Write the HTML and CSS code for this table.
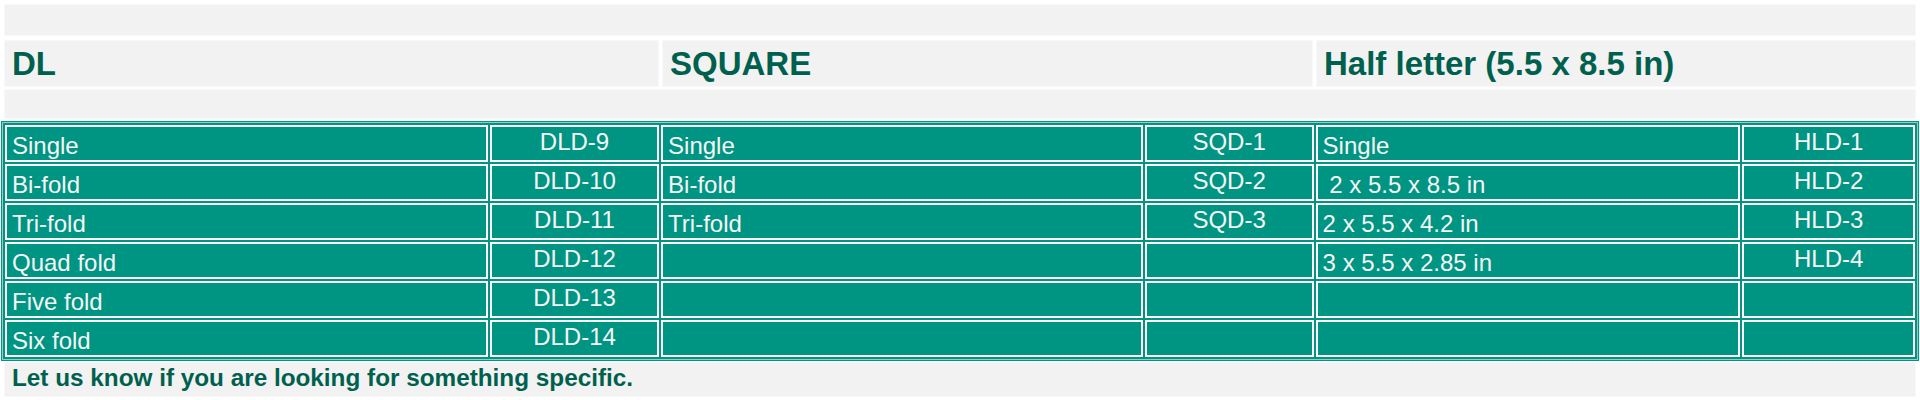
FILE: index.html
```html
<!DOCTYPE html>
<html lang="en">
<head>
<meta charset="utf-8">
<title>Folded cards</title>
<link rel="stylesheet" href="styles.css">
</head>
<body>
<div class="page">
  <div class="bar bar-top"></div>
  <div class="heads">
    <div class="head">DL</div>
    <div class="head">SQUARE</div>
    <div class="head">Half letter (5.5 x 8.5 in)</div>
  </div>
  <div class="bar bar-empty"></div>
  <table class="grid">
    <colgroup>
      <col class="c-name1"><col class="c-code"><col class="c-name2"><col class="c-code"><col class="c-name3"><col class="c-code6">
    </colgroup>
    <tbody>
      <tr><td class="name">Single</td><td class="code">DLD-9</td><td class="name">Single</td><td class="code">SQD-1</td><td class="name">Single</td><td class="code">HLD-1</td></tr>
      <tr><td class="name">Bi-fold</td><td class="code">DLD-10</td><td class="name">Bi-fold</td><td class="code">SQD-2</td><td class="name">&nbsp;2 x 5.5 x 8.5 in</td><td class="code">HLD-2</td></tr>
      <tr><td class="name">Tri-fold</td><td class="code">DLD-11</td><td class="name">Tri-fold</td><td class="code">SQD-3</td><td class="name">2 x 5.5 x 4.2 in</td><td class="code">HLD-3</td></tr>
      <tr><td class="name">Quad fold</td><td class="code">DLD-12</td><td class="name"></td><td class="code"></td><td class="name">3 x 5.5 x 2.85 in</td><td class="code">HLD-4</td></tr>
      <tr><td class="name">Five fold</td><td class="code">DLD-13</td><td class="name"></td><td class="code"></td><td class="name"></td><td class="code"></td></tr>
      <tr><td class="name">Six fold</td><td class="code">DLD-14</td><td class="name"></td><td class="code"></td><td class="name"></td><td class="code"></td></tr>
    </tbody>
  </table>
  <div class="bar foot">Let us know if you are looking for something specific.</div>
</div>
</body>
</html>
```
FILE: styles.css
```css
html, body {
  margin: 0;
  padding: 0;
  background: #ffffff;
}
body {
  font-family: "Liberation Sans", Arial, sans-serif;
  color: #00604e;
}
.page {
  display: flex;
  flex-direction: column;
  padding: 4px 3px 0 3px;
  width: 1920px;
  box-sizing: border-box;
}
.bar {
  background: #f2f2f2;
  border: 1px solid #f8f8f8;
  box-sizing: border-box;
  margin: 0 1px;
}
.bar-top {
  height: 32px;
}
.heads {
  display: grid;
  grid-template-columns: 655px 651px 1fr;
  gap: 3px;
  margin: 4px 1px 0 1px;
}
.head {
  background: #f2f2f2;
  border: 1px solid #f8f8f8;
  height: 47px;
  box-sizing: border-box;
  padding: 4px 0 0 7px;
  font-size: 33px;
  font-weight: bold;
  line-height: 38px;
  color: #00604e;
}
.bar-empty {
  height: 30px;
  margin-top: 2px;
}
.grid {
  margin: 3px -1px 0 -1px;
  width: 1916px;
  table-layout: fixed;
  border-collapse: separate;
  border-spacing: 2px;
  background: #009482;
  border: 1px solid #8fd0c6;
  box-shadow: 0 0 0 1px #009482;
  font-size: 24px;
  color: #f6f6f6;
}
.c-name1 { width: 25.42%; }
.c-name2 { width: 25.34%; }
.c-name3 { width: 22.36%; }
.c-code { width: 8.9%; }
.c-code6 { width: 9.08%; }
.grid td {
  height: 37px;
  box-sizing: border-box;
  border: 2px solid #ffffff;
  padding: 3px 5px 0 5px;
  vertical-align: top;
  line-height: 24px;
  white-space: nowrap;
  overflow: hidden;
}
.grid td.name {
  padding-top: 7px;
  text-align: left;
}
.grid td.code {
  text-align: center;
}
.foot {
  margin-top: 2px;
  height: 35px;
  padding: 1px 0 0 7px;
  font-size: 24.3px;
  font-weight: bold;
  line-height: 27px;
  color: #00604e;
}
```
